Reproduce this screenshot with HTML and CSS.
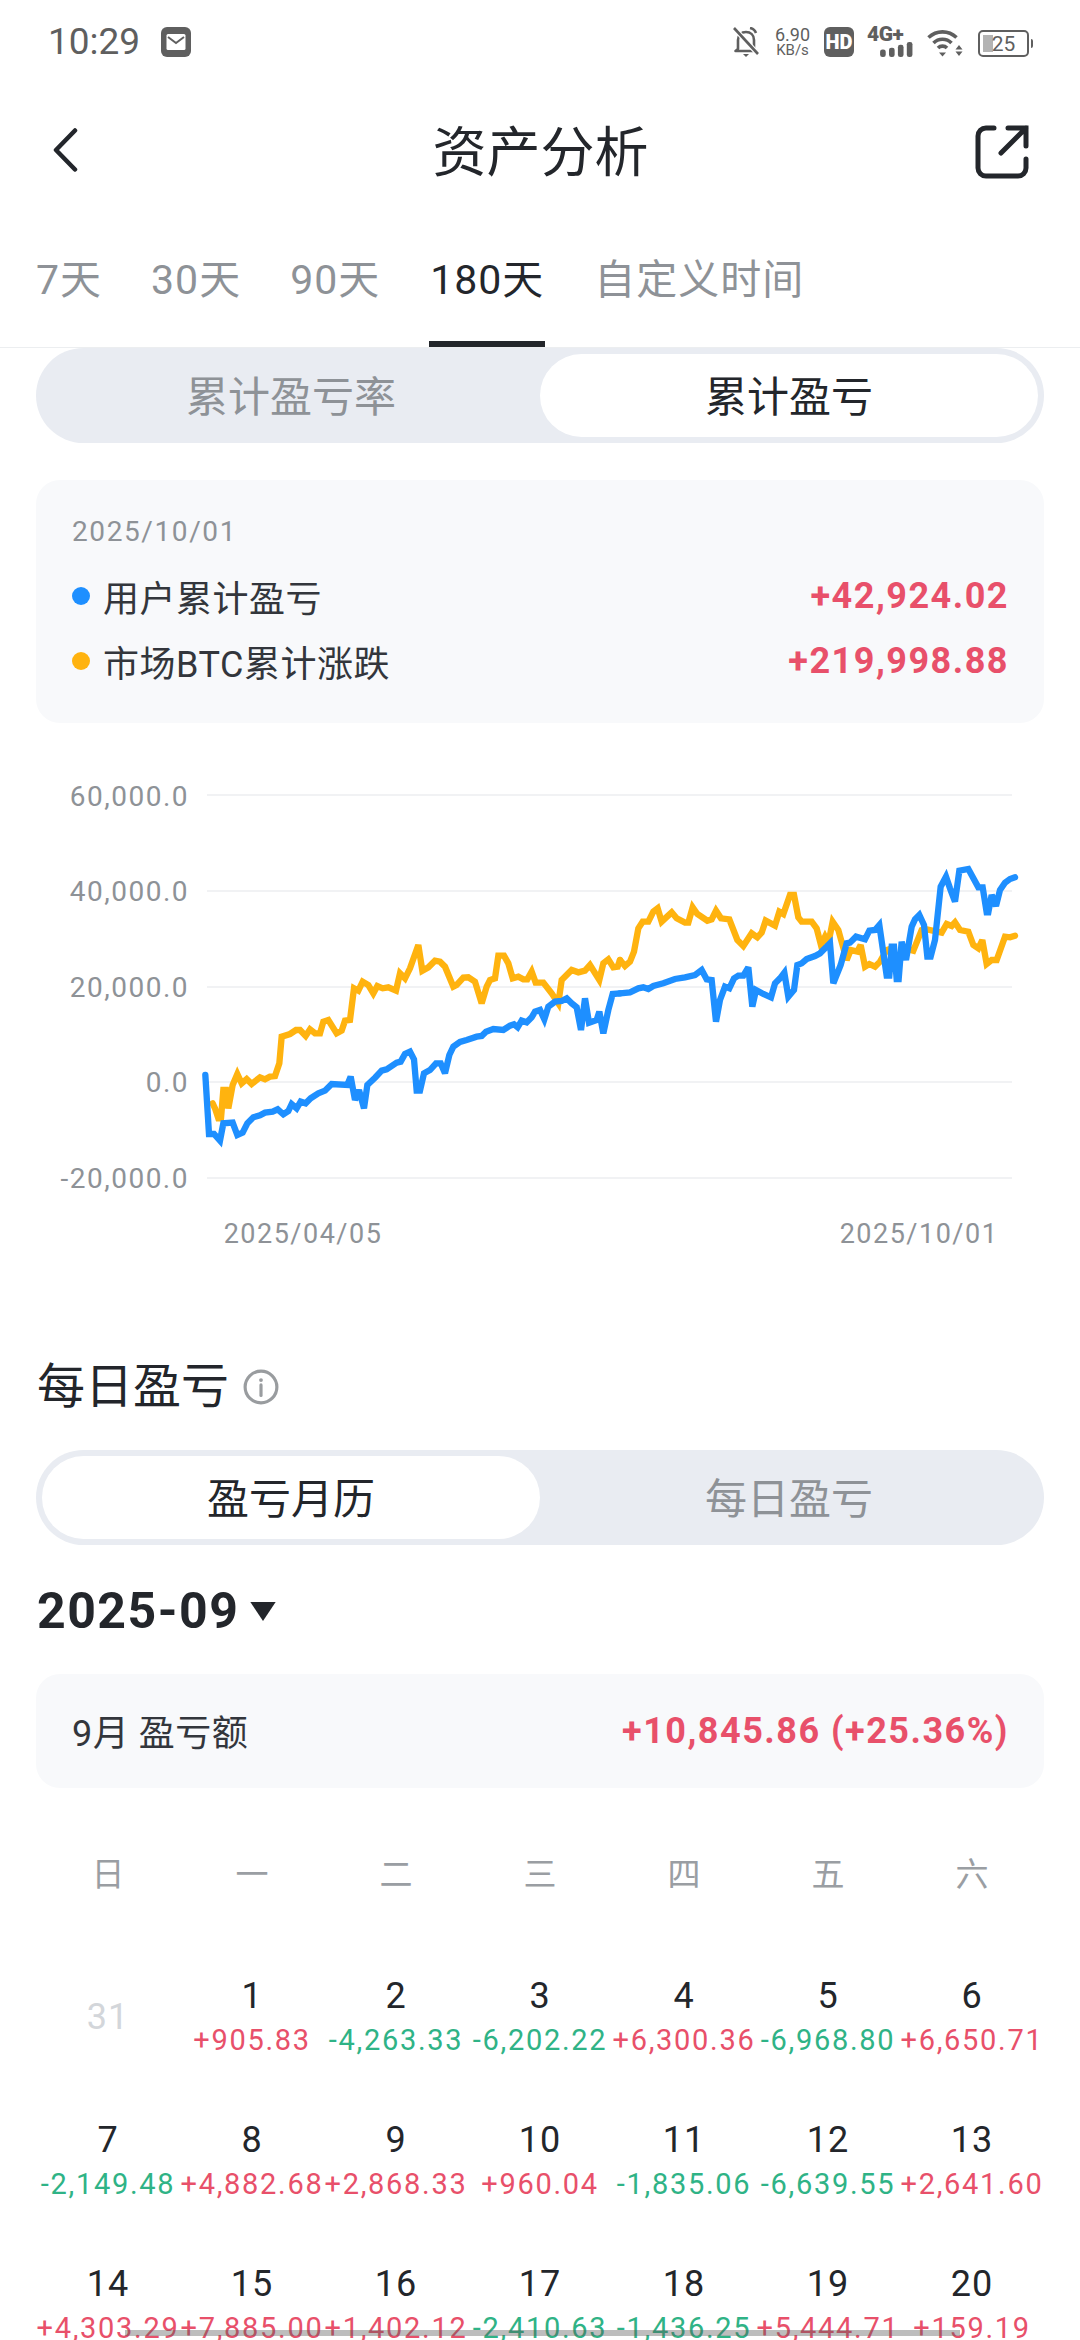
FILE: index.html
```html
<!DOCTYPE html>
<html lang="zh">
<head>
<meta charset="utf-8">
<title>资产分析</title>
<link rel="stylesheet" href="styles.css">
</head>
<body>
<div class="page">
  <div class="status">
    <div class="status-left">
      <span class="time">10:29</span>
      <svg class="ic-mail" viewBox="0 0 30 30"><rect width="30" height="30" rx="6" fill="#5f5f5f"/><rect x="5.500" y="7" width="19" height="16" rx="1.500" fill="#fff"/><path d="M7 10l8 6 8-6" fill="none" stroke="#5f5f5f" stroke-width="2"/></svg>
    </div>
    <div class="status-right">
      <svg class="ic-bell" viewBox="0 0 26 30"><path d="M5 22V13c0-5 3.500-8 8-8s8 3 8 8v9l2.500 2H2.500z" fill="none" stroke="#5f5f5f" stroke-width="2.600" stroke-linejoin="round"/><path d="M2 2l22 24" stroke="#fff" stroke-width="5"/><path d="M1 1l24 26" stroke="#5f5f5f" stroke-width="2.600"/><path d="M10 27h6l-3 3z" fill="#5f5f5f"/><path d="M17 1c3 .5 5 2.500 6 5" fill="none" stroke="#5f5f5f" stroke-width="2.600"/></svg>
      <div class="speed"><span class="speed-a">6.90</span><span class="speed-b">KB/s</span></div>
      <div class="hd">HD</div>
      <div class="net">
        <span class="net-t">4G+</span>
        <svg class="ic-bars" viewBox="0 0 35 16"><rect x="0" y="8" width="6" height="8" rx="2.500" fill="#5f5f5f"/><rect x="9.500" y="6" width="6" height="10" rx="2.500" fill="#5f5f5f"/><rect x="19" y="3" width="6" height="13" rx="2.500" fill="#5f5f5f"/><rect x="28.500" y="0" width="6" height="16" rx="2.500" fill="#5f5f5f"/></svg>
      </div>
      <svg class="ic-wifi" viewBox="0 0 36 28"><path d="M1.500 8.500c8-7.500 20-7.500 28 0M6.500 14c5-5 13-5 18 0M11 19c2.500-2.500 6.500-2.500 9 0" fill="none" stroke="#5f5f5f" stroke-width="3.600"/><path d="M12 23.500h7l-3.500 4z" fill="#5f5f5f"/><path d="M32 16l3.500 4.500h-7zM28.500 22.500h7L32 27z" fill="#5f5f5f"/></svg>
      <div class="batt"><div class="batt-body"><div class="batt-fill"></div><span class="batt-n">25</span></div><div class="batt-tip"></div></div>
    </div>
  </div>

  <div class="nav">
    <svg class="ic-back" viewBox="0 0 26 44"><path d="M23 2.500L4 22l19 19.500" fill="none" stroke="#23262b" stroke-width="4.500" stroke-linecap="round" stroke-linejoin="round"/></svg>
    <div class="nav-title">资产分析</div>
    <svg class="ic-share" viewBox="0 0 54 54"><path d="M19 3H11a8 8 0 0 0-8 8v32a8 8 0 0 0 8 8h32a8 8 0 0 0 8-8v-9" fill="none" stroke="#23262b" stroke-width="5" stroke-linecap="round"/><path d="M26 28L51 3M33 3h18v18" fill="none" stroke="#23262b" stroke-width="5" stroke-linecap="round"/></svg>
  </div>

  <div class="tabs">
    <span class="tab">7天</span>
    <span class="tab">30天</span>
    <span class="tab">90天</span>
    <span class="tab tab-on">180天</span>
    <span class="tab">自定义时间</span>
  </div>

  <main class="main">
    <div class="seg">
      <div class="seg-item">累计盈亏率</div>
      <div class="seg-item seg-on">累计盈亏</div>
    </div>

    <div class="card card-sum">
      <div class="sum-date">2025/10/01</div>
      <div class="sum-row"><span class="dot dot-blue"></span><span class="sum-label">用户累计盈亏</span><span class="sum-val">+42,924.02</span></div>
      <div class="sum-row"><span class="dot dot-yellow"></span><span class="sum-label">市场BTC累计涨跌</span><span class="sum-val">+219,998.88</span></div>
    </div>

    <svg class="chart" viewBox="36 723 1008 617">
      <g class="grid">
        <line x1="207" x2="1012" y1="795" y2="795"/>
        <line x1="207" x2="1012" y1="891" y2="891"/>
        <line x1="207" x2="1012" y1="987" y2="987"/>
        <line x1="207" x2="1012" y1="1082" y2="1082"/>
        <line x1="207" x2="1012" y1="1178" y2="1178"/>
      </g>
      <g class="axis">
        <text x="189" y="806">60,000.0</text>
        <text x="189" y="901">40,000.0</text>
        <text x="189" y="997">20,000.0</text>
        <text x="189" y="1092">0.0</text>
        <text x="189" y="1188">-20,000.0</text>
      </g>
      <g class="axis-x">
        <text x="303" y="1243">2025/04/05</text>
        <text x="919" y="1243">2025/10/01</text>
      </g>
      <g transform="translate(190 780) scale(.33333)" class="ln ln-y">
        <polyline points="68,970 75,985 85,1015 93,1015 100,930 108,930 115,985 128,915 142,882 155,910 170,897 185,912 210,892 225,898 240,890 255,888 268,850 275,770 300,762 318,750 330,750 347,768 360,748 375,760 390,760 400,725 415,720 440,760 455,752 465,722 480,720 492,625 505,632 518,605 535,615 550,640 562,618 578,625 595,622 618,632 630,580 645,595 660,565 685,495 697,572 715,562 735,542 750,545 765,560 790,620 800,615 820,593 835,592 855,605 875,670 890,620 900,600 915,595 925,527 942,527 955,550 968,595 985,590 1000,598 1012,598 1025,575 1037,608 1060,608 1085,640 1105,670 1115,600 1145,570 1165,577 1185,572 1200,555 1228,600 1240,550 1255,538 1270,562 1283,560 1290,540"/>
      </g>
      <g transform="translate(620 780) scale(.33333)" class="ln ln-y">
        <polyline points="0,540 15,558 30,545 42,515 55,445 68,425 85,425 100,395 113,385 125,425 155,397 170,415 195,428 205,428 218,382 232,402 262,422 275,418 288,392 303,415 328,418 352,480 370,498 395,460 412,472 425,458 437,422 465,437 478,395 490,402 510,345 522,345 535,412 545,425 575,425 590,445 603,495 615,470 625,490 638,425 655,450 680,540 692,510 712,515 722,495 735,560 748,552 765,560 780,545 800,510 815,505 830,540 855,505 880,512 905,450 915,447 965,458 980,432 995,438 1005,427 1020,450 1045,455 1060,495 1075,505 1087,480 1100,552 1115,540 1130,540 1155,470 1170,472 1185,467"/>
      </g>
      <g transform="translate(190 780) scale(.33333)" class="ln ln-b">
        <polyline points="46,885 57,1062 72,1062 90,1082 100,1030 128,1028 142,1065 158,1058 172,1030 190,1012 210,1006 225,998 248,995 263,988 280,1003 295,993 305,972 320,985 332,965 347,970 362,955 385,940 405,932 425,912 472,915 482,890 495,960 507,930 522,985 532,915 555,893 575,872 590,868 620,848 632,845 645,822 660,815 672,838 680,932 690,932 702,880 720,870 738,850 752,850 765,880 778,825 790,800 810,786 830,780 860,770 875,768 888,755 910,747 940,750 960,737 972,733 983,742 995,722 1010,727 1025,712 1035,695 1050,690 1063,718 1075,680 1095,665 1115,663 1130,655 1145,670 1160,682 1173,750 1185,655 1197,728 1220,720 1228,695 1240,760 1255,690 1268,642 1290,640"/>
      </g>
      <g transform="translate(620 780) scale(.33333)" class="ln ln-b">
        <polyline points="0,640 30,637 55,625 70,622 85,627 100,618 130,610 165,597 195,592 225,585 245,570 260,598 275,600 288,725 300,660 315,620 328,625 342,595 355,587 370,587 385,562 397,680 408,630 430,642 453,652 465,610 480,595 493,578 505,650 522,630 532,555 545,550 560,537 585,528 600,520 630,490 640,610 662,555 680,490 690,488 708,470 735,478 748,452 765,450 778,435 800,587 808,587 815,500 822,500 830,597 836,597 845,485 858,540 875,440 885,418 898,405 912,435 922,530 932,530 945,480 962,320 978,290 990,325 1005,365 1018,272 1045,267 1075,322 1088,322 1100,397 1105,397 1115,345 1128,378 1140,330 1155,308 1170,297 1185,292"/>
      </g>
    </svg>

    <div class="sec-head">
      <span class="sec-title">每日盈亏</span>
      <svg class="ic-info" viewBox="0 0 34 34"><circle cx="17" cy="17" r="15" fill="none" stroke="#999c9f" stroke-width="3"/><circle cx="17" cy="10.500" r="1.800" fill="#999c9f"/><path d="M17 15v10" stroke="#999c9f" stroke-width="3" stroke-linecap="round"/></svg>
    </div>

    <div class="seg seg-2">
      <div class="seg-item seg-on">盈亏月历</div>
      <div class="seg-item">每日盈亏</div>
    </div>

    <div class="month">
      <span class="month-t">2025-09</span>
      <svg class="ic-tri" viewBox="0 0 24 18"><path d="M0 0h24L12 18z" fill="#23262b"/></svg>
    </div>

    <div class="card card-month">
      <span class="month-label">9月 盈亏额</span>
      <span class="sum-val">+10,845.86 (+25.36%)</span>
    </div>

    <div class="week">
      <span>日</span><span>一</span><span>二</span><span>三</span><span>四</span><span>五</span><span>六</span>
    </div>

    <div class="cal">
      <div class="cell cell-muted"><span class="d">31</span></div>
      <div class="cell"><span class="d">1</span><span class="v up">+905.83</span></div>
      <div class="cell"><span class="d">2</span><span class="v dn">-4,263.33</span></div>
      <div class="cell"><span class="d">3</span><span class="v dn">-6,202.22</span></div>
      <div class="cell"><span class="d">4</span><span class="v up">+6,300.36</span></div>
      <div class="cell"><span class="d">5</span><span class="v dn">-6,968.80</span></div>
      <div class="cell"><span class="d">6</span><span class="v up">+6,650.71</span></div>
      <div class="cell"><span class="d">7</span><span class="v dn">-2,149.48</span></div>
      <div class="cell"><span class="d">8</span><span class="v up">+4,882.68</span></div>
      <div class="cell"><span class="d">9</span><span class="v up">+2,868.33</span></div>
      <div class="cell"><span class="d">10</span><span class="v up">+960.04</span></div>
      <div class="cell"><span class="d">11</span><span class="v dn">-1,835.06</span></div>
      <div class="cell"><span class="d">12</span><span class="v dn">-6,639.55</span></div>
      <div class="cell"><span class="d">13</span><span class="v up">+2,641.60</span></div>
      <div class="cell"><span class="d">14</span><span class="v up">+4,303.29</span></div>
      <div class="cell"><span class="d">15</span><span class="v up">+7,885.00</span></div>
      <div class="cell"><span class="d">16</span><span class="v up">+1,402.12</span></div>
      <div class="cell"><span class="d">17</span><span class="v dn">-2,410.63</span></div>
      <div class="cell"><span class="d">18</span><span class="v dn">-1,436.25</span></div>
      <div class="cell"><span class="d">19</span><span class="v up">+5,444.71</span></div>
      <div class="cell"><span class="d">20</span><span class="v up">+159.19</span></div>
    </div>
  </main>
  <div class="home-bar"></div>
</div>
</body>
</html>
```
FILE: styles.css
```css
* { box-sizing: border-box; }
html, body { margin: 0; padding: 0; background: #fff; }
body { font-family: Roboto, "Noto Sans CJK SC", sans-serif; color: #23262b; }
.page { position: relative; width: 1080px; height: 2340px; overflow: hidden; background: #fff; }

/* status bar */
.status { height: 84px; display: flex; justify-content: space-between; align-items: flex-start; padding: 27px 47px 0 48px; }
.status-left { display: flex; align-items: center; gap: 21px; height: 30px; }
.time { font-size: 37px; line-height: 30px; color: #5f5f5f; }
.ic-mail { width: 30px; height: 30px; display: block; }
.status-right { display: flex; align-items: flex-start; gap: 13px; height: 30px; }
.ic-bell { width: 26px; height: 30px; display: block; }
.speed { width: 37px; display: flex; flex-direction: column; align-items: center; color: #5f5f5f; margin-left: 2px; }
.speed-a { font-size: 18px; line-height: 16px; }
.speed-b { font-size: 15px; line-height: 15px; }
.hd { width: 30px; height: 30px; border-radius: 6px; background: #5f5f5f; color: #fff; font-size: 20px; font-weight: 900; line-height: 30px; text-align: center; }
.net { width: 47px; height: 30px; display: flex; flex-direction: column; }
.net-t { font-size: 21px; font-weight: 900; line-height: 15px; color: #5f5f5f; letter-spacing: -.5px; }
.ic-bars { width: 35px; height: 16px; align-self: flex-end; display: block; }
.ic-wifi { width: 36px; height: 28px; margin-top: 2px; display: block; }
.batt { display: flex; align-items: center; margin-top: 3px; margin-left: 2px; }
.batt-body { position: relative; width: 51px; height: 27px; border: 2px solid #5f5f5f; border-radius: 5px; display: flex; align-items: center; justify-content: center; }
.batt-fill { position: absolute; left: 3px; top: 3px; bottom: 3px; width: 10px; background: #b3b3b3; }
.batt-n { position: relative; font-size: 21px; line-height: 20px; color: #5f5f5f; }
.batt-tip { width: 2px; height: 9px; margin-left: 2px; background: #5f5f5f; border-radius: 0 2px 2px 0; }

/* nav */
.nav { height: 136px; display: grid; grid-template-columns: 1fr auto 1fr; align-items: center; padding: 0 51px 0 52px; }
.ic-back { width: 26px; height: 44px; display: block; margin-top: -4px; }
.nav-title { font-size: 54px; line-height: 64px; padding-top: 3px; }
.ic-share { width: 54px; height: 54px; display: block; justify-self: end; }

/* tabs */
.tabs { height: 128px; display: flex; gap: 49px; padding: 0 0 0 36px; border-bottom: 1px solid #eceef0; }
.tab { font-size: 41px; line-height: 48px; color: #8e9297; padding-top: 36px; height: 127px; letter-spacing: 1px; white-space: nowrap; }
.tab-on { color: #23262b; width: 116px; text-align: center; border-bottom: 6px solid #23262b; }

/* main */
.main { padding: 0 36px; }
.seg { height: 95px; border-radius: 48px; background: #e9ecf2; padding: 6px; display: grid; grid-template-columns: 1fr 1fr; }
.seg-item { display: flex; align-items: center; justify-content: center; border-radius: 42px; font-size: 42px; color: #8e9297; padding-bottom: 5px; }
.seg-on { background: #fff; color: #23262b; }

.card { background: #f8f9fb; border-radius: 24px; }
.card-sum { margin-top: 37px; height: 243px; padding: 36px 35px 0 36px; }
.sum-date { font-size: 28px; line-height: 32px; color: #8e9297; letter-spacing: 1.600px; }
.sum-row { display: flex; align-items: center; height: 65px; }
.sum-date + .sum-row { margin-top: 15px; }
.dot { width: 18px; height: 18px; border-radius: 50%; margin-right: 13px; }
.dot-blue { background: #1e8fff; }
.dot-yellow { background: #ffb30f; }
.sum-label { font-size: 36px; color: #33363c; letter-spacing: .5px; }
.sum-val { margin-left: auto; font-size: 36px; font-weight: 700; color: #e8506a; letter-spacing: 1.500px; }

.chart { display: block; width: 1008px; height: 617px; }
.grid line { stroke: #f1f2f4; stroke-width: 2; }
.axis text { font-size: 28px; fill: #8e9297; text-anchor: end; letter-spacing: 1.500px; }
.axis-x text { font-size: 27px; fill: #8e9297; text-anchor: middle; letter-spacing: 1.500px; }
.ln polyline { fill: none; stroke-width: 19; stroke-linecap: round; stroke-linejoin: miter; stroke-miterlimit: 3; }
.ln-y polyline { stroke: #ffb30f; }
.ln-b polyline { stroke: #1e8fff; }

.sec-head { height: 64px; margin-top: 15px; display: flex; align-items: center; }
.sec-title { font-size: 48px; line-height: 64px; margin-left: 1px; }
.ic-info { width: 36px; height: 36px; margin-left: 14px; display: block; }
.seg-2 { margin-top: 31px; }

.month { height: 64px; margin-top: 34px; margin-bottom: -3px; display: flex; align-items: center; }
.month-t { font-size: 50px; font-weight: 700; line-height: 64px; letter-spacing: 1.500px; margin-left: 1px; }
.ic-tri { width: 26px; height: 19px; margin-left: 11px; display: block; }

.card-month { margin-top: 34px; height: 114px; padding: 0 35px 0 36px; display: flex; align-items: center; }
.month-label { font-size: 36px; color: #33363c; letter-spacing: .5px; padding-bottom: 2px; }

.week { margin-top: 65px; display: grid; grid-template-columns: repeat(7, 1fr); text-align: center; font-size: 33px; line-height: 44px; color: #9a9ea3; }

.cal { margin-top: 53px; display: grid; grid-template-columns: repeat(7, 1fr); grid-auto-rows: 144px; }
.cell { display: flex; flex-direction: column; align-items: center; padding-top: 24px; }
.cell-muted { padding-top: 45px; }
.cell-muted .d { color: #d3d6da; }
.d { font-size: 36px; line-height: 44px; color: #23262b; letter-spacing: 1px; }
.v { font-size: 29px; line-height: 40px; margin-top: 2px; letter-spacing: 1.700px; white-space: nowrap; }
.up { color: #e8506a; }
.dn { color: #2fb386; }

.home-bar { position: absolute; left: 125px; right: 120px; top: 2330px; height: 6px; background: rgba(90, 90, 90, .4); }
```
